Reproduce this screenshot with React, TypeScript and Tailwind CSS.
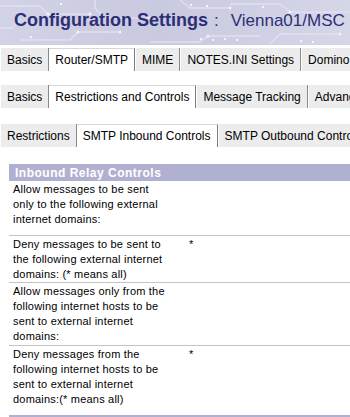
import React from "react"

type TabItem = { label: string; active?: boolean }

const tabRows: TabItem[][] = [
  [
    { label: "Basics" },
    { label: "Router/SMTP", active: true },
    { label: "MIME" },
    { label: "NOTES.INI Settings" },
    { label: "Domino Web Engine" },
  ],
  [
    { label: "Basics" },
    { label: "Restrictions and Controls", active: true },
    { label: "Message Tracking" },
    { label: "Advanced" },
  ],
  [
    { label: "Restrictions" },
    { label: "SMTP Inbound Controls", active: true },
    { label: "SMTP Outbound Controls" },
  ],
]

// label lines are broken where the original form wraps them
const relayRows = [
  { lines: ["Allow messages to be sent", "only to the following external", "internet domains:"], value: "", h: "h-[55px]" },
  { lines: ["Deny messages to be sent to", "the following external internet", "domains: (* means all)"], value: "*", h: "h-[47px]" },
  { lines: ["Allow messages only from the", "following internet hosts to be", "sent to external internet", "domains:"], value: "", h: "h-[63px]" },
  { lines: ["Deny messages from the", "following internet hosts to be", "sent to external internet", "domains:(* means all)"], value: "*", h: "h-[69px]" },
]

function Banner() {
  return (
    <div className="relative h-[45px] overflow-hidden">
      <svg className="absolute inset-0" width="350" height="45" viewBox="0 0 350 45">
        <defs>
          <linearGradient id="bg" x1="0" y1="0" x2="1" y2="0">
            <stop offset="0" stopColor="#d3d3e7" />
            <stop offset="0.45" stopColor="#c9c9df" />
            <stop offset="1" stopColor="#d6d6e9" />
          </linearGradient>
        </defs>
        <rect width="350" height="45" fill="url(#bg)" />
        <g stroke="#dfdfee" strokeWidth="1.5" fill="none">
          <path d="M0 6 H40 L48 14 H90" />
          <path d="M20 40 H70 L78 32 H120" />
          <path d="M95 0 V8 L105 18 H150" />
          <path d="M150 42 H200 L208 36 H260" />
          <path d="M230 4 H280 L290 12 H350" />
          <path d="M270 44 L280 34 H340" />
          <path d="M180 0 L190 8 H230" />
          <path d="M0 28 H12 L18 22" />
        </g>
        <g fill="#f2f2f8">
          <circle cx="48" cy="14" r="1.5" />
          <circle cx="90" cy="14" r="1.5" />
          <circle cx="78" cy="32" r="1.5" />
          <circle cx="150" cy="18" r="1.5" />
          <circle cx="208" cy="36" r="1.5" />
          <circle cx="290" cy="12" r="1.5" />
          <circle cx="340" cy="34" r="1.5" />
          <circle cx="230" cy="8" r="1.5" />
          <circle cx="120" cy="32" r="1.5" />
          <circle cx="18" cy="22" r="1.5" />
        </g>
        <g fill="#ffffff" opacity="0.8">
          <rect x="200" y="38" width="2" height="2" />
          <rect x="212" y="39" width="2" height="2" />
          <rect x="224" y="38" width="2" height="2" />
          <rect x="236" y="39" width="2" height="2" />
          <rect x="190" y="4" width="2" height="2" />
          <rect x="206" y="5" width="2" height="2" />
          <rect x="262" y="6" width="2" height="2" />
          <rect x="300" y="40" width="2" height="2" />
          <rect x="312" y="41" width="2" height="2" />
          <rect x="60" y="3" width="2" height="2" />
          <rect x="30" y="36" width="2" height="2" />
        </g>
      </svg>
      <div className="relative pl-[14px] pt-[9px] whitespace-nowrap text-[#2c2e76] leading-[22px]">
        <span className="text-[18px] font-bold">Configuration Settings</span>
        <span className="ml-[6px] text-[17px]">:</span>
        <span className="ml-[12px] text-[17px]">Vienna01/MSC</span>
      </div>
    </div>
  )
}

function TabRow({ tabs, className }: { tabs: TabItem[]; className: string }) {
  return (
    <div className={`flex h-[23px] whitespace-nowrap text-[12px] text-black ${className}`}>
      {tabs.map((t, i) =>
        t.active ? (
          <div key={i} className="flex items-center px-[6px] bg-white border-t border-t-[#d6d6d6] border-r border-r-[#7a7a7a]">
            {t.label}
          </div>
        ) : (
          <div key={i} className="flex items-center px-[6px] bg-[#ececec] border-l border-l-white border-r border-r-[#8a8a8a]">
            {t.label}
          </div>
        )
      )}
    </div>
  )
}

export default function App() {
  return (
    <div className="w-[350px] h-[417px] overflow-hidden bg-white font-['Liberation_Sans',Arial,sans-serif]">
      <Banner />
      <TabRow tabs={tabRows[0]} className="mt-[3px]" />
      <TabRow tabs={tabRows[1]} className="mt-[14px]" />
      <TabRow tabs={tabRows[2]} className="mt-[16px]" />

      <div className="ml-[9px] mt-[17px]">
        <div className="h-[17px] flex items-center pl-[6px] bg-[#b0b1d1] text-white text-[12px] font-bold tracking-[0.5px] whitespace-nowrap">
          Inbound Relay Controls
        </div>
        {relayRows.map((r, i) => (
          <div key={i} className={`flex ${r.h} ${i < relayRows.length - 1 ? "border-b border-[#c4c4c4]" : ""}`}>
            <div className="w-[179px] pl-[4px] pt-[1px] text-[11px] leading-[15px] text-black whitespace-nowrap tracking-[0.2px]">
              {r.lines.map((l, j) => (
                <div key={j}>{l}</div>
              ))}
            </div>
            <div className="pl-[1px] pt-[1px] text-[11px] leading-[15px] text-black">{r.value}</div>
          </div>
        ))}
        <div className="h-[10px] bg-[#b0b1d1]" />
      </div>
    </div>
  )
}
